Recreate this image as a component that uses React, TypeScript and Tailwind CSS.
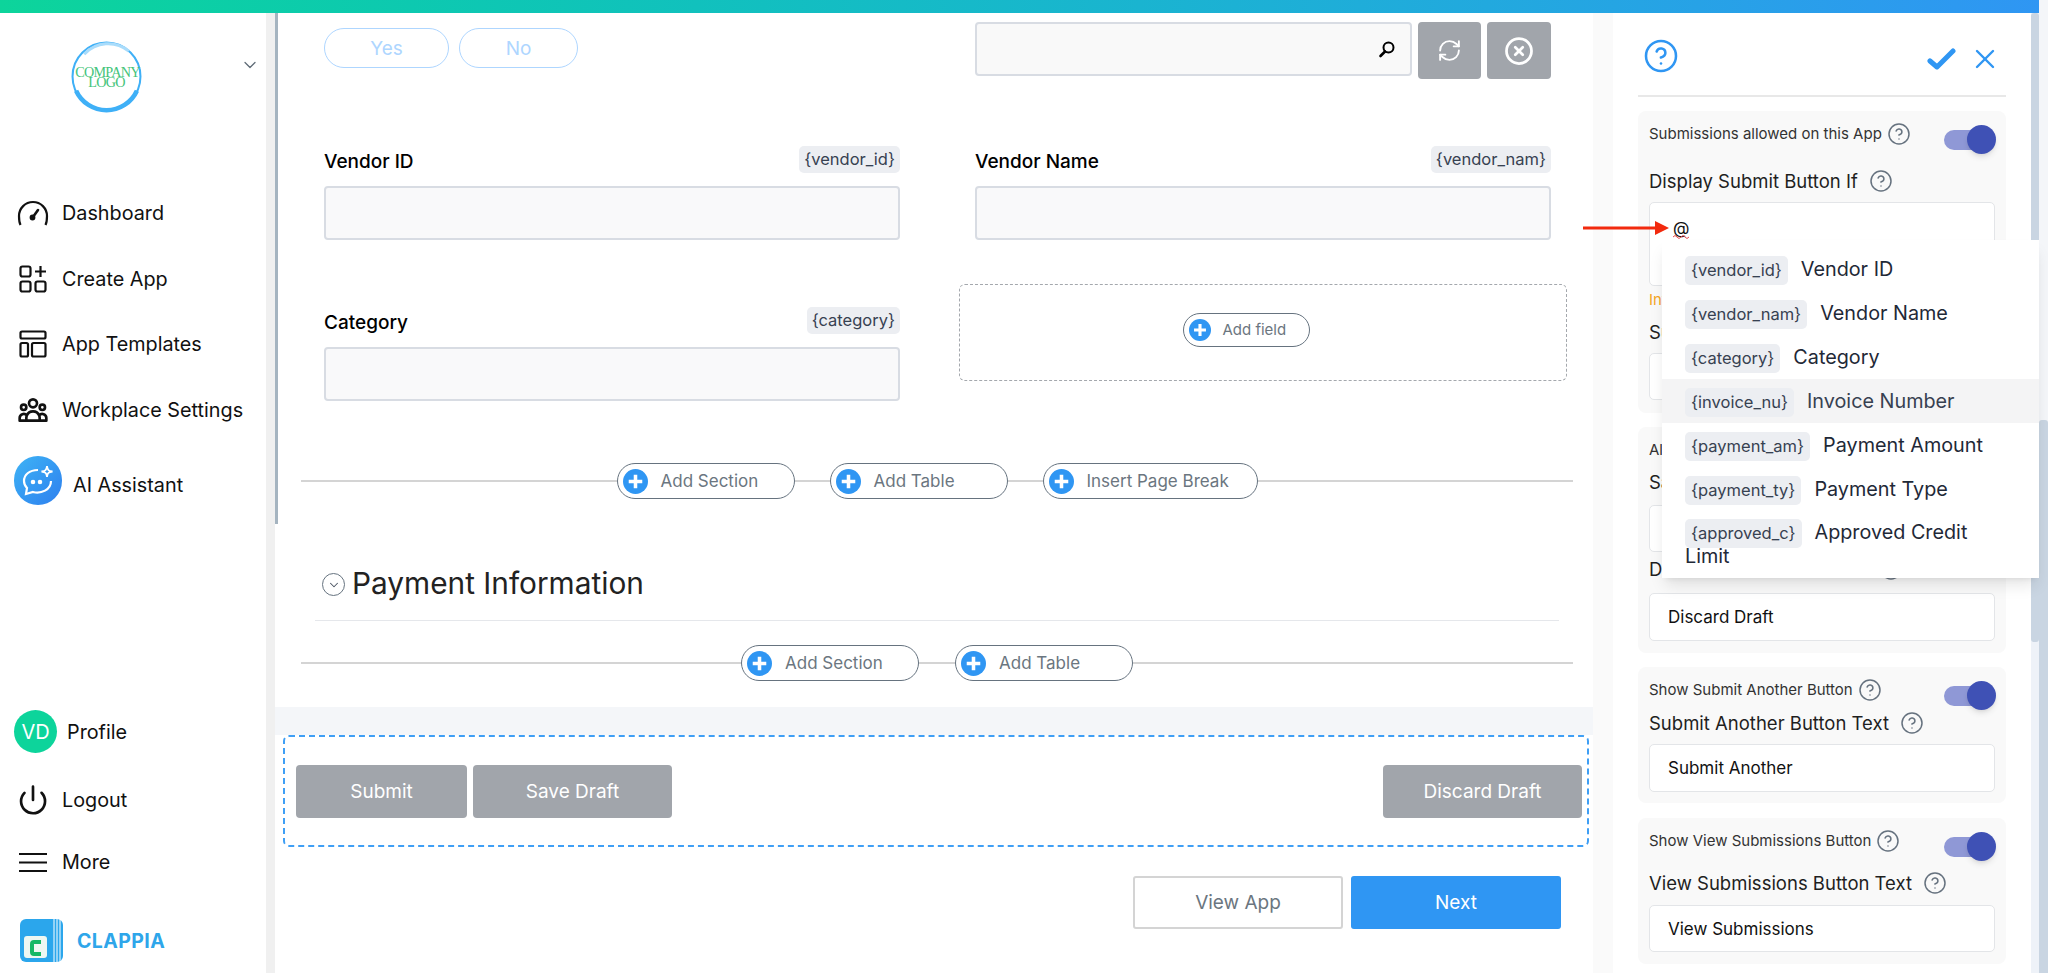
import { ChevronDown, CircleHelp, CircleX, Power, RefreshCw, X } from "lucide-react";
import type { ReactNode } from "react";
import { HiOutlineUserGroup } from "react-icons/hi";

const tokens = [
  { tag: "{vendor_id}", name: "Vendor ID" },
  { tag: "{vendor_nam}", name: "Vendor Name" },
  { tag: "{category}", name: "Category" },
  { tag: "{invoice_nu}", name: "Invoice Number", active: true },
  { tag: "{payment_am}", name: "Payment Amount" },
  { tag: "{payment_ty}", name: "Payment Type" },
  { tag: "{approved_c}", name: "Approved Credit Limit" },
];

function PlusCircle({ size }: { size: number }) {
  return (
    <svg width={size} height={size} viewBox="0 0 24 24" className="shrink-0">
      <circle cx="12" cy="12" r="12" fill="#2f96f3" />
      <path d="M12 5.500v13M5.500 12h13" stroke="#fff" strokeWidth="3.400" />
    </svg>
  );
}

function AddPill({ label, width }: { label: string; width: string }) {
  return (
    <div className={`flex h-[36px] shrink-0 items-center rounded-full border border-[#66737f] bg-white pl-[5px] ${width}`}>
      <PlusCircle size={25} />
      <span className="ml-[13px] pt-[2px] text-[17px] text-[#6b7680]">{label}</span>
    </div>
  );
}

function Tag({ children }: { children: ReactNode }) {
  return (
    <span className="rounded-[5px] bg-[#eceef2] px-[5px] py-[3px] text-[16.500px] leading-[21px] text-[#374151]">
      {children}
    </span>
  );
}

function Field({ label, tag }: { label: string; tag: string }) {
  return (
    <div className="mt-[67px]">
      <div className="flex h-[27px] items-center justify-between">
        <span className="pt-[5px] text-[19px] font-medium text-black">{label}</span>
        <Tag>{tag}</Tag>
      </div>
      <div className="mt-[13px] h-[54px] rounded-[4px] border-2 border-[#d8dce3] bg-[#f9f9fa]" />
    </div>
  );
}

function NavItem({ icon, label, mt }: { icon: ReactNode; label: string; mt: string }) {
  return (
    <div className={`flex h-[40px] items-center pl-[17px] ${mt}`}>
      <span className="flex w-[32px] justify-center">{icon}</span>
      <span className="ml-[13px] pt-[2px] text-[19.800px] text-[#111]">{label}</span>
    </div>
  );
}

function Help() {
  return <CircleHelp size={24} strokeWidth={1.500} className="shrink-0 text-[#66727f]" />;
}

function Toggle() {
  return (
    <span className="relative mt-[5px] mr-[-1px] flex h-[29px] w-[52px] shrink-0 items-center">
      <span className="h-[20px] w-[50px] rounded-full bg-[#8f98d6]" />
      <span className="absolute right-0 top-0 h-[29px] w-[29px] rounded-full bg-[#3f51b5] shadow-md" />
    </span>
  );
}

function ToggleRow({ label, height }: { label: string; height: string }) {
  return (
    <div className={`flex items-start justify-between ${height}`}>
      <span className="flex h-[28px] items-center gap-[5px] text-[15px] text-[#333]">
        <span className="pt-[1px]">{label}</span>
        <Help />
      </span>
      <Toggle />
    </div>
  );
}

function PanelLabel({ label, mt }: { label: string; mt?: string }) {
  return (
    <div className={`flex h-[28px] items-center gap-[11px] text-[18.500px] text-[#1f1f1f] ${mt ?? ""}`}>
      <span className="pt-[2px]">{label}</span>
      <Help />
    </div>
  );
}

function TextBox({ value, className }: { value?: string; className: string }) {
  return (
    <div className={`flex items-center rounded-[5px] border border-[#e3e5e8] bg-white pl-[18px] pt-[2px] text-[17px] text-[#111] ${className}`}>
      {value}
    </div>
  );
}

function Card({ children, className }: { children: ReactNode; className: string }) {
  return <div className={`rounded-[8px] bg-[#f9f9f9] px-[11px] pt-[9px] ${className}`}>{children}</div>;
}

function Sidebar() {
  return (
    <aside className="flex w-[266px] shrink-0 flex-col bg-white">
      <div className="relative mt-[27px] flex h-[73px] justify-center pr-[70px] pl-[16px]">
        <svg width="73" height="73" viewBox="0 0 72 72">
          <circle cx="36" cy="36" r="33.500" fill="none" stroke="#3fb0f7" strokeWidth="2" />
          <path d="M6 50 A33 33 0 0 0 66 50" fill="none" stroke="#3fb0f7" strokeWidth="4.500" />
          <path d="M14 14 A32 32 0 0 1 58 11" fill="none" stroke="#a9dcfb" strokeWidth="3" />
          <text x="37" y="36" textAnchor="middle" fontFamily="Liberation Serif" fontSize="14" fill="#43c47a" letterSpacing="-0.700">
            COMPANY
          </text>
          <text x="36" y="46" textAnchor="middle" fontFamily="Liberation Serif" fontSize="14" fill="#43c47a" letterSpacing="-0.700">
            LOGO
          </text>
        </svg>
        <ChevronDown size={20} strokeWidth={1.500} className="absolute left-[240px] top-[15px] text-[#5f6b76]" />
      </div>

      <NavItem
        mt="mt-[80px]"
        label="Dashboard"
        icon={
          <svg width="32" height="26" viewBox="0 0 32 26" fill="none" stroke="#111" strokeWidth="2.200">
            <path d="M3.500 25 Q2 22 2 16 A14 14 0 0 1 30 16 Q30 22 28.500 25" />
            <path d="M21 10l-5 7" strokeWidth="2.600" strokeLinecap="round" />
            <circle cx="15.500" cy="17.500" r="1.800" fill="#111" />
          </svg>
        }
      />
      <NavItem
        mt="mt-[26px]"
        label="Create App"
        icon={
          <svg width="28" height="28" viewBox="0 0 28 28" fill="none" stroke="#111" strokeWidth="2.200">
            <rect x="1.500" y="1.500" width="10" height="10" rx="2" />
            <rect x="1.500" y="16.500" width="10" height="10" rx="2" />
            <rect x="16.500" y="16.500" width="10" height="10" rx="2" />
            <path d="M21.500 1v11M16 6.500h11" />
          </svg>
        }
      />
      <NavItem
        mt="mt-[25px]"
        label="App Templates"
        icon={
          <svg width="28" height="28" viewBox="0 0 28 28" fill="none" stroke="#111" strokeWidth="2.200">
            <rect x="1.500" y="1.500" width="25" height="7" rx="1.500" />
            <rect x="1.500" y="13" width="7.500" height="13.500" rx="1.500" />
            <rect x="13" y="13" width="13.500" height="13.500" rx="1.500" />
          </svg>
        }
      />
      <NavItem mt="mt-[26px]" label="Workplace Settings" icon={<HiOutlineUserGroup size={34} color="#111" />} />

      <div className="mt-[26px] flex h-[49px] items-start pl-[14px]">
        <span className="flex h-[49px] w-[48px] items-center justify-center rounded-full bg-gradient-to-br from-[#3fb3f5] to-[#2f7fee]">
          <svg width="34" height="32" viewBox="0 0 34 32" fill="none" stroke="#fff" strokeWidth="2.200">
            <path d="M17 5 C8 5 3 10 3 16 C3 19 4 21 6 23 L5 29 L12 27 C20 29 30 25 30 16" />
            <circle cx="12" cy="17" r="1.200" fill="#fff" />
            <circle cx="19" cy="17" r="1.200" fill="#fff" />
            <path d="M26 1 C26.500 5 27.500 6 31.500 6.500 C27.500 7 26.500 8 26 12 C25.500 8 24.500 7 20.500 6.500 C24.500 6 25.500 5 26 1Z" strokeWidth="1.800" />
          </svg>
        </span>
        <span className="ml-[11px] mt-[15px] text-[19.800px] leading-[28px] text-[#111]">AI Assistant</span>
      </div>

      <div className="mt-[205px] flex h-[43px] items-center pl-[14px]">
        <span className="flex h-[43px] w-[43px] items-center justify-center rounded-full bg-[#0dd49b] text-[20px] text-white">VD</span>
        <span className="ml-[10px] pt-[2px] text-[19.800px] text-[#111]">Profile</span>
      </div>
      <NavItem mt="mt-[27px]" label="Logout" icon={<Power size={32} strokeWidth={2} color="#111" />} />
      <NavItem
        mt="mt-[22px]"
        label="More"
        icon={
          <svg width="28" height="20" viewBox="0 0 28 20" stroke="#111" strokeWidth="2">
            <path d="M0 2h28M0 10.500h28M0 19h28" />
          </svg>
        }
      />

      <div className="mt-[37px] flex h-[43px] items-center pl-[20px]">
        <svg width="43" height="43" viewBox="0 0 43 43">
          <rect width="43" height="43" rx="6" fill="#2ba6ec" />
          <path d="M34 0v43M37 0v43M40 0v43" stroke="#fff" strokeWidth="1" />
          <rect x="4" y="17" width="23" height="22" rx="3" fill="#eef7f2" />
          <path d="M21 23h-7a2 2 0 0 0-2 2v8a2 2 0 0 0 2 2h7" fill="none" stroke="#16b866" strokeWidth="4" />
        </svg>
        <span className="ml-[14px] pt-[2px] text-[19.500px] font-bold tracking-[0.400px] text-[#2ea6ea]">CLAPPIA</span>
      </div>
    </aside>
  );
}

function MainArea() {
  return (
    <main className="w-[1315px] shrink-0 bg-white">
      <div className="ml-[46px] grid w-[1227px] grid-cols-[576px_576px] gap-x-[75px]">
        <div className="flex gap-[10px] pt-[15px]">
          <span className="flex h-[40px] w-[125px] items-center justify-center rounded-full border border-[#aed6ff] pt-[3px] text-[19px] text-[#aed6ff]">Yes</span>
          <span className="flex h-[40px] w-[119px] items-center justify-center rounded-full border border-[#aed6ff] pt-[3px] text-[19px] text-[#aed6ff]">No</span>
        </div>
        <div className="flex gap-[6px] pt-[9px]">
          <div className="flex h-[54px] w-[437px] items-center justify-end rounded-[4px] border-2 border-[#d8dce3] bg-[#f9f9f9] pr-[14px]">
            <svg width="18" height="18" viewBox="0 0 18 18" fill="none" stroke="#000" strokeWidth="2">
              <circle cx="10.500" cy="7.500" r="5" />
              <path d="M7 11.500l-4.500 4.500" strokeWidth="2.600" strokeLinecap="round" />
            </svg>
          </div>
          <span className="flex h-[57px] w-[63px] items-center justify-center rounded-[4px] bg-[#a1a5ab]">
            <RefreshCw size={25} color="#fff" strokeWidth={1.800} />
          </span>
          <span className="flex h-[57px] w-[64px] items-center justify-center rounded-[4px] bg-[#a1a5ab]">
            <CircleX size={30} color="#fff" strokeWidth={2.200} />
          </span>
        </div>

        <Field label="Vendor ID" tag="{vendor_id}" />
        <Field label="Vendor Name" tag="{vendor_nam}" />
        <Field label="Category" tag="{category}" />
        <div className="mt-[44px] ml-[-16px] flex h-[97px] w-[608px] items-center justify-center rounded-[6px] border border-dashed border-[#a4a8ad] pr-[34px] pb-[6px]">
          <div className="flex h-[34px] w-[127px] items-center rounded-full border border-[#66737f] bg-white pl-[5px]">
            <PlusCircle size={22} />
            <span className="ml-[12px] pt-[1px] text-[15px] text-[#6b7680]">Add field</span>
          </div>
        </div>
      </div>

      <div className="ml-[23px] mt-[62px] flex w-[1272px] items-center">
        <span className="h-[2px] flex-1 bg-[#d4d4d4]" />
        <AddPill label="Add Section" width="w-[178px]" />
        <span className="h-[2px] w-[35px] bg-[#d4d4d4]" />
        <AddPill label="Add Table" width="w-[178px]" />
        <span className="h-[2px] w-[35px] bg-[#d4d4d4]" />
        <AddPill label="Insert Page Break" width="w-[215px]" />
        <span className="h-[2px] flex-1 bg-[#d4d4d4]" />
      </div>

      <div className="ml-[44px] mt-[64px] flex h-[40px] items-center">
        <span className="mt-[3px] flex h-[23px] w-[23px] items-center justify-center rounded-full border border-[#66737f]">
          <ChevronDown size={14} strokeWidth={1.800} color="#4b5563" />
        </span>
        <span className="ml-[7px] text-[29.800px] text-[#222]">Payment Information</span>
      </div>
      <div className="ml-[37px] mt-[17px] h-[1px] w-[1244px] bg-[#e5e7eb]" />

      <div className="ml-[23px] mt-[24px] flex w-[1272px] items-center">
        <span className="h-[2px] flex-1 bg-[#d4d4d4]" />
        <AddPill label="Add Section" width="w-[178px]" />
        <span className="h-[2px] w-[36px] bg-[#d4d4d4]" />
        <AddPill label="Add Table" width="w-[178px]" />
        <span className="h-[2px] flex-1 bg-[#d4d4d4]" />
      </div>

      <div className="ml-[-3px] mt-[26px] h-[28px] w-[1318px] bg-[#f4f6f9]" />

      <div className="ml-[5px] flex h-[112px] w-[1306px] items-center rounded-[6px] border-2 border-dashed border-[#3f9ff5] pl-[11px] pr-[5px]">
        <span className="flex h-[53px] w-[171px] items-center justify-center rounded-[4px] bg-[#a1a5ab] pt-[2px] text-[19px] text-white">Submit</span>
        <span className="ml-[6px] flex h-[53px] w-[199px] items-center justify-center rounded-[4px] bg-[#a1a5ab] pt-[2px] text-[19px] text-white">Save Draft</span>
        <span className="ml-auto flex h-[53px] w-[199px] items-center justify-center rounded-[4px] bg-[#a1a5ab] pt-[2px] text-[19px] text-white">Discard Draft</span>
      </div>

      <div className="mt-[29px] flex justify-end gap-[8px] pr-[32px]">
        <span className="flex h-[53px] w-[210px] items-center justify-center rounded-[3px] border-2 border-[#d4d4d4] pt-[1px] text-[19px] text-[#6b7680]">View App</span>
        <span className="flex h-[53px] w-[210px] items-center justify-center rounded-[3px] bg-[#2f96f3] pt-[1px] text-[19px] text-white">Next</span>
      </div>
    </main>
  );
}

function RightPanel() {
  return (
    <section className="w-[418px] shrink-0 bg-white pl-[25px] pr-[25px]">
      <div className="flex h-[84px] items-start justify-between border-b-2 border-[#e8e8e8] pl-[5px] pr-[5px]">
        <CircleHelp size={36} strokeWidth={1.700} color="#2f96f3" className="mt-[25px]" />
        <div className="mt-[30px] flex items-center gap-[13px]">
          <svg width="29" height="22" viewBox="0 0 29 22" fill="none" stroke="#2f96f3" strokeWidth="5" strokeLinecap="round" strokeLinejoin="round">
            <path d="M3 13l7 6L26 3" />
          </svg>
          <X size={32} strokeWidth={1.800} color="#2f96f3" />
        </div>
      </div>

      <Card className="mt-[14px] h-[302px]">
        <ToggleRow label="Submissions allowed on this App" height="h-[47px]" />
        <PanelLabel label="Display Submit Button If" />
        <TextBox className="mt-[7px] h-[84px] !items-start !pl-[23px] !pt-[13px]" value="@" />
        <div className="mt-[4px] h-[20px] text-[15px] leading-[20px] text-[#f5a623]">Invalid condition</div>
        <PanelLabel label="Submit Button Text" mt="mt-[8px]" />
        <TextBox className="mt-[7px] h-[47px]" value="Submit" />
      </Card>

      <Card className="mt-[14px] h-[226px]">
        <ToggleRow label="Allow Save Draft" height="h-[32px]" />
        <PanelLabel label="Save Draft Button Text" />
        <TextBox className="mt-[9px] h-[47px]" value="Save Draft" />
        <PanelLabel label="Discard Draft Button Text" mt="mt-[3px]" />
        <TextBox className="mt-[10px] h-[48px]" value="Discard Draft" />
      </Card>

      <Card className="mt-[14px] h-[136px]">
        <ToggleRow label="Show Submit Another Button" height="h-[33px]" />
        <PanelLabel label="Submit Another Button Text" />
        <TextBox className="mt-[7px] h-[48px]" value="Submit Another" />
      </Card>

      <Card className="mt-[15px] h-[146px]">
        <ToggleRow label="Show View Submissions Button" height="h-[42px]" />
        <PanelLabel label="View Submissions Button Text" />
        <TextBox className="mt-[8px] h-[47px]" value="View Submissions" />
      </Card>
    </section>
  );
}

function MentionMenu() {
  return (
    <div className="absolute left-[1662px] top-[240px] h-[338px] w-[377px] bg-white pt-[7px] shadow-lg">
      {tokens.map((t) => (
        <div
          key={t.tag}
          className={`pl-[23px] pr-[50px] pt-[8px] text-[19.800px] ${t.active ? "bg-[#f4f4f5] text-[#374151]" : "text-[#1f2937]"} ${t.name === "Approved Credit Limit" ? "leading-[16px]" : "h-[44px] leading-[29px]"}`}
        >
          <span className="mr-[13px] inline-block h-[29px] rounded-[5px] bg-[#eceef2] px-[6px] text-[16.500px] leading-[29px] text-[#374151]">
            {t.tag}
          </span>
          {t.name}
        </div>
      ))}
    </div>
  );
}

export default function App() {
  return (
    <div className="relative flex h-[973px] w-[2048px] overflow-hidden bg-white font-[Inter,sans-serif]">
      <div className="flex w-[2039px] shrink-0 flex-col">
        <div className="h-[13px] shrink-0 bg-gradient-to-r from-[#0dd49b] to-[#2f96f3] shadow-sm" />
        <div className="flex min-h-0 flex-1">
          <Sidebar />
          <div className="w-[9px] shrink-0 bg-[#f0f0f0]" />
          <div className="w-[3px] shrink-0 bg-white">
            <div className="h-[511px] bg-[#a5b4c0]" />
          </div>
          <MainArea />
          <div className="w-[20px] shrink-0 bg-[#fafafa]" />
          <RightPanel />
          <div className="w-[8px] shrink-0 bg-[#eef2f8]">
            <div className="h-[629px] rounded-[3px] bg-[#c9d5e2]" />
          </div>
        </div>
      </div>
      <div className="w-[9px] shrink-0 bg-[#f4f6f9] pt-[420px]">
        <div className="h-[553px] rounded-t-[3px] bg-[#c9d5e2]" />
      </div>

      <MentionMenu />

      {/* red arrow + spellcheck squiggle sit on top of the open condition field */}
      <svg width="110" height="30" viewBox="0 0 110 30" className="absolute left-[1583px] top-[213px]">
        <path d="M0 15h74" stroke="#f22a0e" strokeWidth="3" />
        <path d="M72 8l14 7-14 7z" fill="#f22a0e" />
        <path d="M90 24q2-3 4 0t4 0 4 0 4 0" fill="none" stroke="#e5484d" strokeWidth="1" />
      </svg>
    </div>
  );
}
